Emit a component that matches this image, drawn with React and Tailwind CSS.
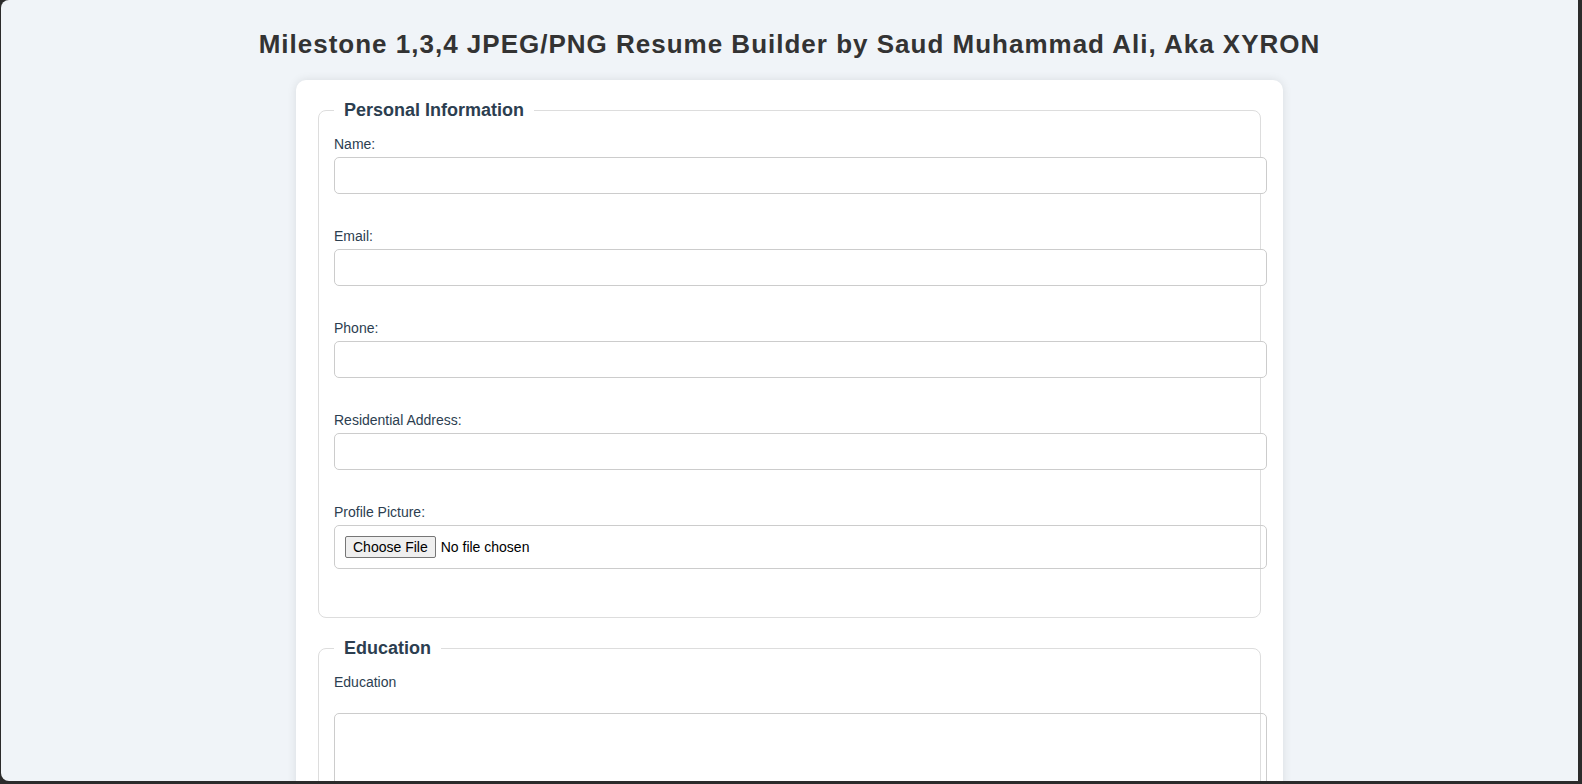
const fields = [
  { label: 'Name:', type: 'text' },
  { label: 'Email:', type: 'email' },
  { label: 'Phone:', type: 'tel' },
  { label: 'Residential Address:', type: 'text' },
]

function Field({ label, type }) {
  return (
    <div>
      <label className="block text-[14px] leading-[16px] text-[#2c3e50] mb-[5px]">{label}</label>
      <input
        type={type}
        className="block w-[calc(100%+22px)] h-[37px] border border-[#ccc] rounded-[5px] bg-white px-[10px] text-[14px] mb-[34px] outline-none"
      />
    </div>
  )
}

export default function App() {
  return (
    <div className="w-[1582px] h-[784px] bg-[#2b2b2b] overflow-hidden" style={{ fontFamily: '"Liberation Sans", Arial, sans-serif' }}>
      <div className="ml-[1px] w-[1577px] h-[781px] bg-[#f0f4f8] rounded-l-[8px] overflow-hidden pt-[29px]">
        <h1 className="text-center text-[26px] leading-[30px] font-bold tracking-[1px] text-[#333] mb-[21px]">
          Milestone 1,3,4 JPEG/PNG Resume Builder by Saud Muhammad Ali, Aka XYRON
        </h1>

        <div className="w-[987px] mx-auto bg-white rounded-[10px] p-[20px] shadow-[0_0_10px_rgba(0,0,0,0.1)]">
          <fieldset className="mx-[2px] border border-[#ddd] rounded-[8px] px-[15px] pt-[15px] pb-[15px] mb-[20px]">
            <legend className="px-[10px] text-[18px] leading-[21px] font-bold text-[#2c3e50]">Personal Information</legend>
            {fields.map(f => <Field key={f.label} {...f} />)}
            <div>
              <label className="block text-[14px] leading-[16px] text-[#2c3e50] mb-[5px]">Profile Picture:</label>
              <div className="w-[calc(100%+22px)] h-[44px] border border-[#ccc] rounded-[5px] px-[10px] py-[10px] flex items-center mb-[33px] text-[14px] text-black">
                <span className="h-[22px] px-[7px] flex items-center bg-[#efefef] border border-[#767676] rounded-[2px]">Choose File</span>
                <span className="ml-[5px]">No file chosen</span>
              </div>
            </div>
          </fieldset>

          <fieldset className="mx-[2px] border border-[#ddd] rounded-[8px] px-[15px] pt-[16px] pb-[15px]">
            <legend className="px-[10px] text-[18px] leading-[20px] font-bold text-[#2c3e50]">Education</legend>
            <label className="block text-[14px] leading-[16px] text-[#2c3e50] mb-[23px]">Education</label>
            <textarea className="block w-[calc(100%+22px)] h-[110px] border border-[#ccc] rounded-[5px] px-[10px] py-[10px] resize-none outline-none" />
          </fieldset>
        </div>
      </div>
    </div>
  )
}
